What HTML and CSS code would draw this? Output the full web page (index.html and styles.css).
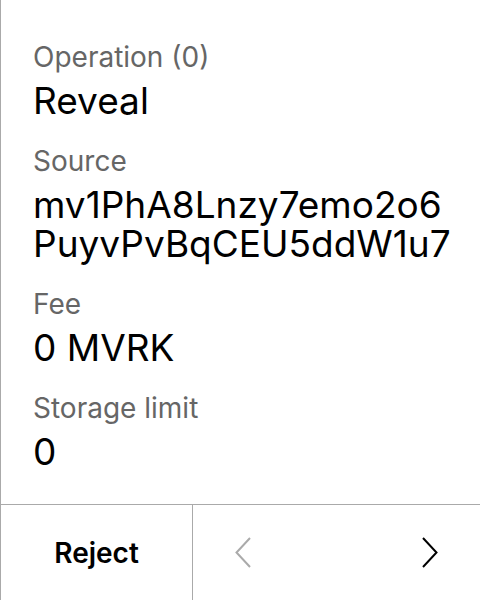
FILE: index.html
```html
<!DOCTYPE html>
<html>
<head>
<meta charset="utf-8">
<link rel="stylesheet" href="styles.css">
</head>
<body>
<div class="screen">
  <div class="content">
    <div class="field">
      <div class="label">Operation (0)</div>
      <div class="value">Reveal</div>
    </div>
    <div class="field">
      <div class="label">Source</div>
      <div class="value">mv1PhA8Lnzy7emo2o6<br>PuyvPvBqCEU5ddW1u7</div>
    </div>
    <div class="field">
      <div class="label">Fee</div>
      <div class="value">0 MVRK</div>
    </div>
    <div class="field">
      <div class="label">Storage limit</div>
      <div class="value">0</div>
    </div>
  </div>
  <div class="actions">
    <div class="reject">Reject</div>
    <div class="nav">
      <svg class="chev prev" width="16" height="31" viewBox="0 0 16 31"><path d="M15 1 L1.5 15.5 L15 30" fill="none" stroke="currentColor" stroke-width="2"/></svg>
      <svg class="chev next" width="16" height="31" viewBox="0 0 16 31"><path d="M1 1 L14.5 15.5 L1 30" fill="none" stroke="currentColor" stroke-width="2"/></svg>
    </div>
  </div>
</div>
</body>
</html>
```
FILE: styles.css
```css
html, body {
  margin: 0;
  padding: 0;
  background: #fff;
}
.screen {
  width: 479px;
  height: 600px;
  border-left: 1px solid #aaa;
  display: flex;
  flex-direction: column;
  font-family: Inter, "Noto Sans", sans-serif;
  color: #000;
}
.content {
  flex: 1;
  padding: 40px 0 0 32px;
  display: flex;
  flex-direction: column;
  gap: 24px;
}
.label {
  font-size: 28px;
  line-height: 34px;
  color: #666;
  margin-bottom: 7px;
}
.value {
  font-size: 37px;
  line-height: 39px;
  color: #000;
}
.actions {
  height: 95px;
  border-top: 1px solid #aaa;
  display: flex;
}
.reject {
  width: 191px;
  border-right: 1px solid #aaa;
  display: flex;
  align-items: center;
  justify-content: center;
  font-size: 28px;
  font-weight: 600;
}
.nav {
  flex: 1;
  display: flex;
  align-items: center;
  justify-content: space-between;
  padding: 0 42px;
}
.prev { color: #aaa; }
.next { color: #000; }
```
